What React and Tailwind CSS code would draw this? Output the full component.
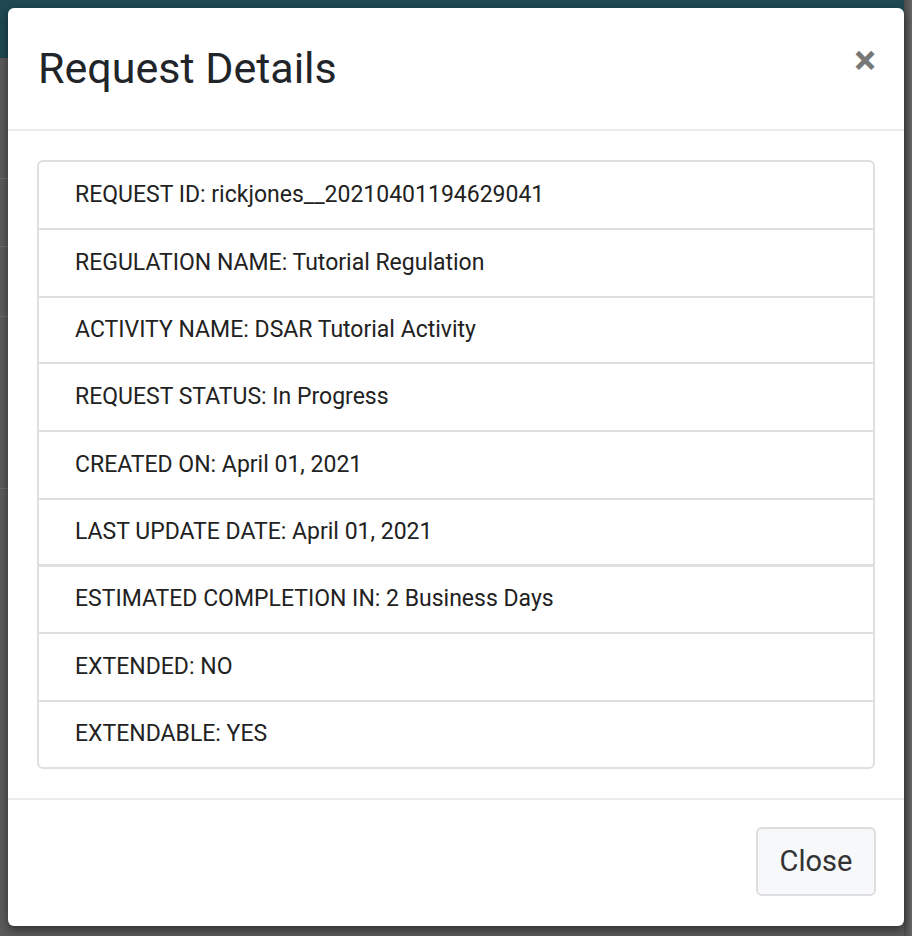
import React from 'react';

const rows = [
  { text: 'REQUEST ID: rickjones__20210401194629041', h: 'h-[66px]' },
  { text: 'REGULATION NAME: Tutorial Regulation', h: 'h-[68px] border-t-2' },
  { text: 'ACTIVITY NAME: DSAR Tutorial Activity', h: 'h-[66px] border-t-2' },
  { text: 'REQUEST STATUS: In Progress', h: 'h-[68px] border-t-2' },
  { text: 'CREATED ON: April 01, 2021', h: 'h-[68px] border-t-2' },
  { text: 'LAST UPDATE DATE: April 01, 2021', h: 'h-[66px] border-t-2' },
  { text: 'ESTIMATED COMPLETION IN: 2 Business Days', h: 'h-[68px] border-t-[3px]' },
  { text: 'EXTENDED: NO', h: 'h-[68px] border-t-2' },
  { text: 'EXTENDABLE: YES', h: 'h-[67px] border-t-2' },
];

const App = () => {
  return (
    <div
      className="relative h-[936px] w-[912px] overflow-hidden bg-[#5a5a5a]"
      style={{ fontFamily: 'Roboto, "Liberation Sans", sans-serif' }}
    >
      {/* dimmed page behind the modal */}
      <div className="absolute inset-x-0 top-0 h-[58px] bg-[#1f4852]" />
      <div className="absolute inset-x-0 top-[178px] h-px bg-[#6a6a6a]" />
      <div className="absolute inset-x-0 top-[246px] h-px bg-[#6a6a6a]" />
      <div className="absolute inset-x-0 top-[316px] h-px bg-[#6a6a6a]" />
      <div className="absolute inset-x-0 top-[488px] h-px bg-[#6a6a6a]" />
      <div className="absolute inset-y-0 right-0 w-[8px] bg-gradient-to-r from-[#4a4a4a] to-[#666]" />

      <div className="relative left-[8px] top-[8px] flex h-[918px] w-[896px] flex-col rounded-[6px] bg-white shadow-[0_4px_10px_rgba(0,0,0,0.45)]">
        <div className="flex h-[123px] items-center justify-between border-b-2 border-[#ececf0] pl-[30px] pr-[28px]">
          <h2 className="text-[43px] leading-none text-[#212529]">Request Details</h2>
          <button className="-mt-[16px] text-[41px] font-bold leading-none text-[#777]">×</button>
        </div>

        <div className="px-[29px] pb-[29px] pt-[29px]">
          <div className="rounded-[6px] border-2 border-[#e0e0e0]">
            {rows.map((r) => (
              <div
                key={r.text}
                className={'flex items-center border-[#e0e0e0] pl-[36px] text-[23px] text-[#222] ' + r.h}
              >
                {r.text}
              </div>
            ))}
          </div>
        </div>

        <div className="flex flex-1 items-start justify-end border-t-2 border-[#ececf0] pr-[28px] pt-[27px]">
          <button className="h-[69px] w-[120px] rounded-[6px] border-2 border-[#dedede] bg-[#f7f8fa] text-[29px] text-[#333]">
            Close
          </button>
        </div>
      </div>
    </div>
  );
};

export default App;
